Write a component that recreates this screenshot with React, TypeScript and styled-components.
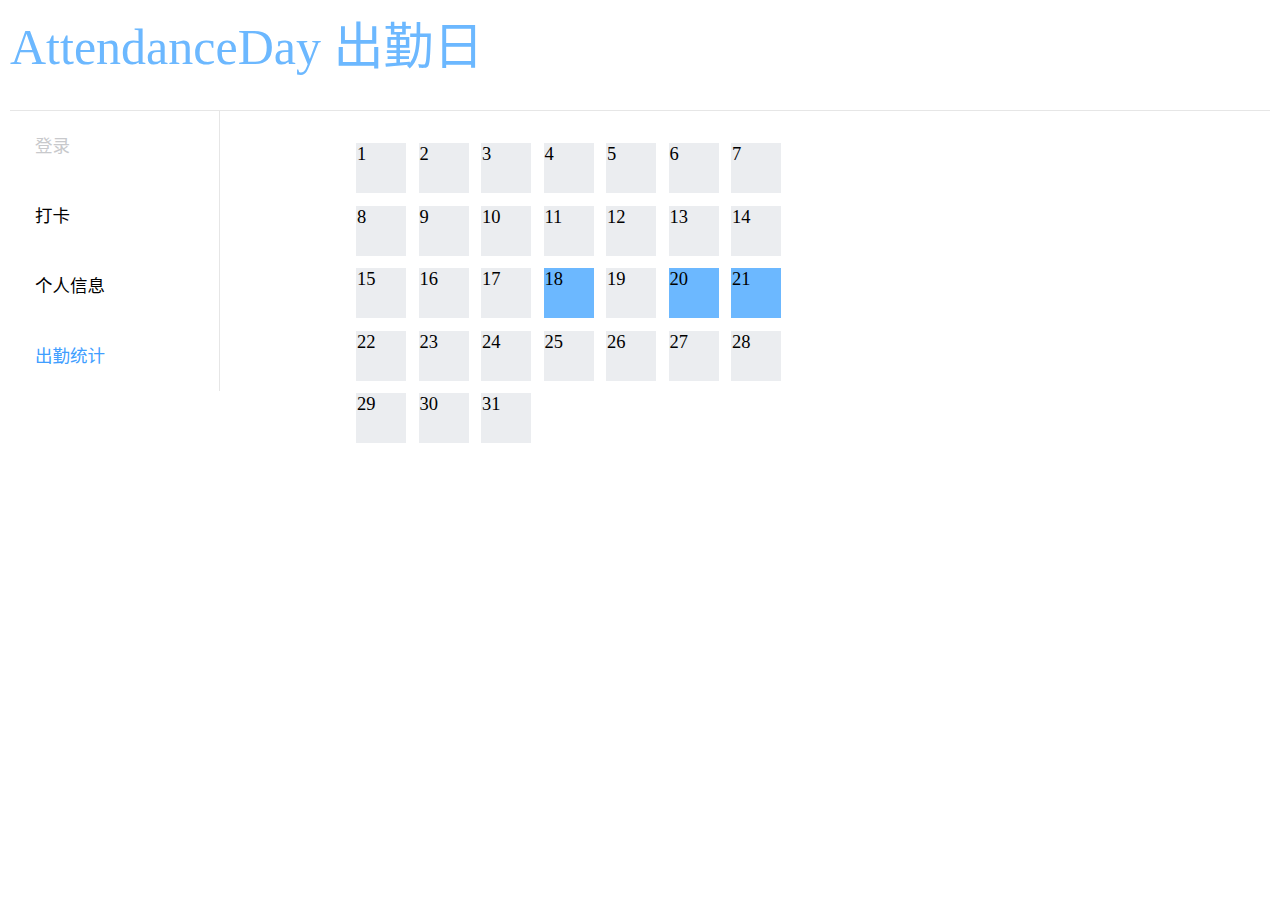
import React from "react";
import styled, { createGlobalStyle } from "styled-components";

const Global = createGlobalStyle`
  html, body { margin: 0; padding: 0; background: #fff; }
  body { font-family: "Liberation Serif", "Noto Sans CJK SC", serif; }
`;

const Page = styled.div`
  padding: 0 10px;
`;

const Header = styled.header`
  height: 110px;
  border-bottom: 1px solid #e6e6e6;
  box-sizing: content-box;
  display: flex;
  align-items: flex-start;
`;

const Title = styled.h1`
  margin: 6px 0 0 0;
  font-family: "Liberation Serif", "Noto Sans CJK SC", serif;
  font-weight: normal;
  font-size: 50px;
  color: #6cb8ff;
`;

const Body = styled.div`
  display: flex;
  align-items: flex-start;
`;

const Menu = styled.nav`
  width: 209px;
  border-right: 1px solid #e6e6e6;
  display: flex;
  flex-direction: column;
`;

const MenuItem = styled.div<{ $state: "disabled" | "normal" | "active" }>`
  height: 70px;
  line-height: 68px;
  padding-left: 25px;
  font-family: "Noto Sans CJK SC", "Noto Sans", sans-serif;
  font-size: 17.5px;
  color: ${(p) =>
    p.$state === "disabled" ? "#c8c9cc" : p.$state === "active" ? "#409eff" : "#000"};
`;

const Main = styled.main`
  flex: 1;
  padding: 32px 0 0 136px;
`;

const Calendar = styled.div`
  display: grid;
  grid-template-columns: repeat(7, 50px);
  grid-auto-rows: 50px;
  column-gap: 12.5px;
  row-gap: 12.5px;
`;

const Day = styled.div<{ $on: boolean }>`
  background: ${(p) => (p.$on ? "#6cb8ff" : "#ebedf0")};
  font-family: "Liberation Serif", serif;
  font-size: 18.5px;
  color: #000;
  padding: 1px 0 0 1px;
  box-sizing: border-box;
`;

const highlighted = new Set([18, 20, 21]);

export default function App() {
  const days = Array.from({ length: 31 }, (_, i) => i + 1);
  return (
    <>
      <Global />
      <Page>
        <Header>
          <Title>AttendanceDay 出勤日</Title>
        </Header>
        <Body>
          <Menu>
            <MenuItem $state="disabled">登录</MenuItem>
            <MenuItem $state="normal">打卡</MenuItem>
            <MenuItem $state="normal">个人信息</MenuItem>
            <MenuItem $state="active">出勤统计</MenuItem>
          </Menu>
          <Main>
            <Calendar>
              {days.map((d) => (
                <Day key={d} $on={highlighted.has(d)}>
                  {d}
                </Day>
              ))}
            </Calendar>
          </Main>
        </Body>
      </Page>
    </>
  );
}
